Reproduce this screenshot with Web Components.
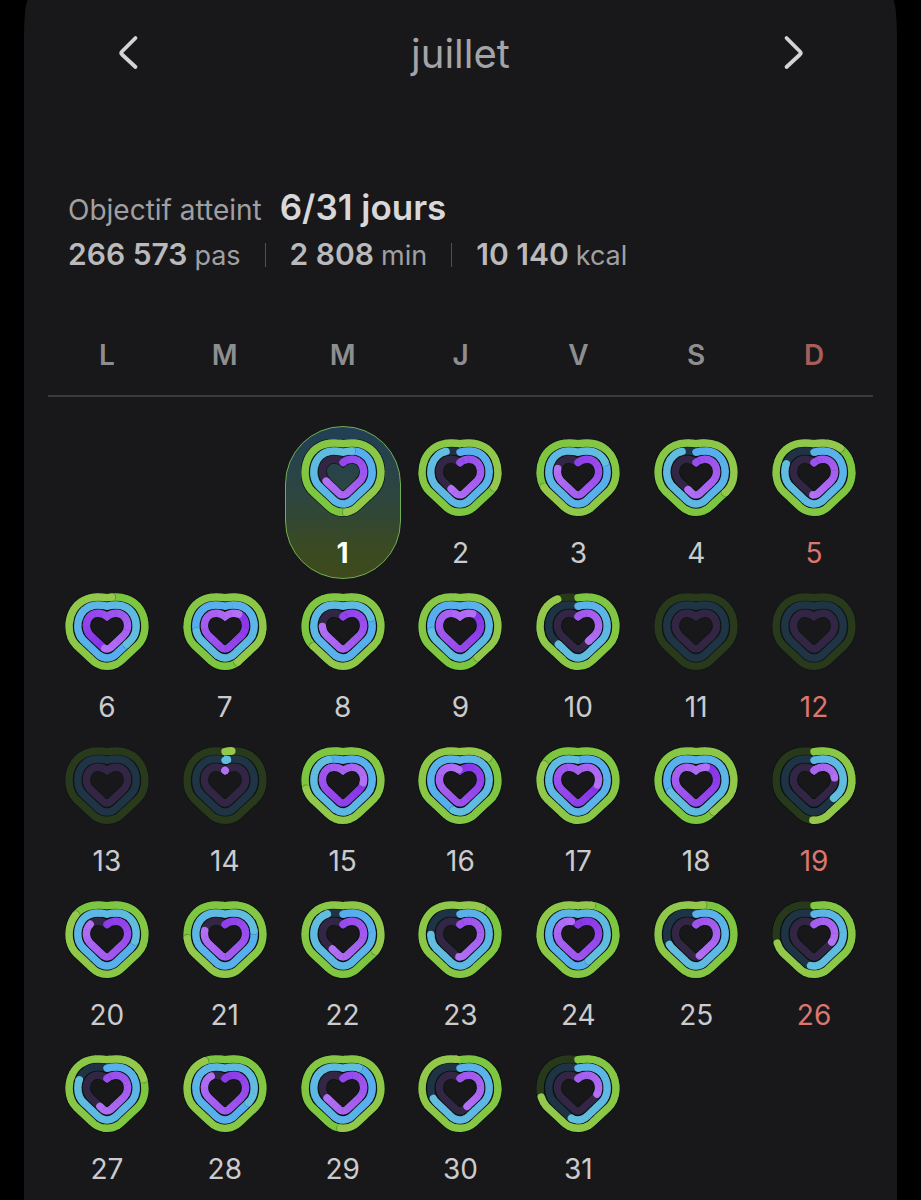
<!DOCTYPE html>
<html lang="fr">
<head>
<meta charset="utf-8">
<meta name="viewport" content="width=device-width, initial-scale=1">
<title>juillet</title>
<style>
body {
  margin: 0;
  background: #000;
  color: #d0d0d2;
  font-family: Inter, Roboto, "Liberation Sans", sans-serif;
}
</style>
</head>
<body>

<activity-card>
  <month-header slot="header">juillet</month-header>
  <goal-summary slot="summary">
    <span slot="label">Objectif atteint</span>
    <span slot="goal">6/31 jours</span>
    <stat-item value="266 573">pas</stat-item>
    <stat-item value="2 808">min</stat-item>
    <stat-item value="10 140">kcal</stat-item>
  </goal-summary>
  <month-calendar selected="1"></month-calendar>
</activity-card>

<script>
class ActivityCard extends HTMLElement {
  constructor() {
    super();
    this.attachShadow({ mode: 'open' });

    this.shadowRoot.innerHTML = `
      <style>
        :host {
          display: block;
          box-sizing: border-box;
          min-height: 100vh;
          margin: 0 24px;
          padding: 0 24px;
          background: #18181a;
          border-radius: 4px 4px 0 0 / 40px 40px 0 0;
        }

        .summary {
          padding: 77px 20px 56px;
        }
      </style>

      <slot name="header"></slot>
      <div class="summary"><slot name="summary"></slot></div>
      <slot></slot>
    `;
  }
}

class MonthHeader extends HTMLElement {
  constructor() {
    super();
    this.attachShadow({ mode: 'open' });

    this.shadowRoot.innerHTML = `
      <style>
        :host {
          display: flex;
          align-items: center;
          justify-content: space-between;
          height: 106px;
          padding: 0 56px;
        }

        h1 {
          margin: 0;
          font-size: 40px;
          font-weight: 400;
          color: #a4a4a6;
        }

        button {
          width: 48px;
          height: 48px;
          padding: 0;
          border: none;
          background: none;
          cursor: pointer;
        }

        svg {
          display: block;
          fill: none;
          stroke: #d4d4d6;
          stroke-width: 3.800;
          stroke-linecap: round;
          stroke-linejoin: round;
        }
      </style>

      <button type="button" aria-label="Mois précédent">
        <svg width="48" height="48" viewBox="0 0 48 48"><path d="M31.500 9 18 22.500Q16.500 24 18 25.500L31.500 38"/></svg>
      </button>
      <h1><slot></slot></h1>
      <button type="button" aria-label="Mois suivant">
        <svg width="48" height="48" viewBox="0 0 48 48"><path d="M17.500 9 31 22.500Q32.500 24 31 25.500L17.500 38"/></svg>
      </button>
    `;
  }
}

class GoalSummary extends HTMLElement {
  constructor() {
    super();
    this.attachShadow({ mode: 'open' });

    this.shadowRoot.innerHTML = `
      <style>
        :host {
          display: block;
          line-height: 48px;
        }

        .goal {
          display: flex;
          align-items: baseline;
          gap: 18px;
          height: 48px;
          font-size: 28px;
          color: #a0a0a2;
        }

        strong {
          font-size: 35px;
          font-weight: 600;
          color: #d8d8da;
        }

        .stats {
          display: flex;
          height: 48px;
        }
      </style>

      <div class="goal">
        <slot name="label"></slot>
        <strong><slot name="goal"></slot></strong>
      </div>
      <div class="stats"><slot></slot></div>
    `;
  }
}

class StatItem extends HTMLElement {
  constructor() {
    super();
    this.attachShadow({ mode: 'open' });

    this.shadowRoot.innerHTML = `
      <style>
        :host {
          display: flex;
          align-items: center;
          font-size: 27px;
          color: #a0a0a2;
        }

        :host(:not(:last-child))::after {
          content: "";
          width: 1px;
          height: 24px;
          margin: 0 24px;
          background: #505053;
        }

        b {
          margin-right: 7px;
          font-size: 30px;
          font-weight: 600;
          color: #bababc;
        }
      </style>

      <span><b>${this.getAttribute('value')}</b><slot></slot></span>
    `;
  }
}

/* RINGS: each path starts at the top notch and runs clockwise */
const RINGS = [
  {
    d: 'M42 4.700C45 4.200 48 4 51 4C69 4 79.900 17 79.900 33.500C79.900 41 77.500 47.500 73 52L57 67C49 75.400 35 75.400 27 67L11 52C6.500 47.500 4.100 41 4.100 33.500C4.100 17 15 4 33 4C36 4 39 4.200 42 4.700Z',
    from: [122, 198, 62],
    to: [149, 200, 76],
    track: '#2b3d1d',
  },
  {
    d: 'M42 13.200C45 12.300 48 12 51.500 12C63.500 12 71.200 21.500 71.200 33C71.200 38.500 69.500 43.700 65.500 47.500L51.500 60.800C46 66.300 38 66.300 32.500 60.800L18.500 47.500C14.500 43.700 12.800 38.500 12.800 33C12.800 21.500 20.500 12 32.500 12C36 12 39 12.300 42 13.200Z',
    from: [86, 172, 240],
    to: [98, 190, 222],
    track: '#21384a',
  },
  {
    d: 'M42 23.500C45 21.200 48 20.200 51 20.200C58 20.200 62.600 26 62.600 32.500C62.600 37 61 40 58 43L46 54.300Q42 57.500 38 54.300L26 43C23 40 21.400 37 21.400 32.500C21.400 26 26 20.200 33 20.200C36 20.200 39 21.200 42 23.500Z',
    from: [134, 50, 232],
    to: [178, 112, 244],
    track: '#38284a',
  },
];
const STROKE = 7.400;
const STEPS = 16;

function dash(d, start, length, color, cap = 'butt', width = STROKE) {
  return `<path d="${d}" pathLength="100" stroke="${color}" stroke-width="${width}" stroke-linecap="${cap}"
    stroke-dasharray="${length} ${100 - length}" stroke-dashoffset="${-start}"/>`;
}

// percent above 100 means a closed ring whose end sits at percent - 100
function drawRing(ring, percent) {
  if (!percent) return '';
  const full = percent > 100;
  const end = full ? percent - 100 : percent;
  const length = full ? 100 : percent;
  const start = end - length;
  const colorAt = (pos) => {
    const t = 1 - (end - pos) / 100;
    return `rgb(${ring.from.map((c, i) => Math.round(c + (ring.to[i] - c) * t)).join(',')})`;
  };

  let out = '';
  if (!full) out += dash(ring.d, start, 0.01, colorAt(start), 'round');
  const step = length / STEPS;
  for (let i = 0; i < STEPS; i++) {
    const pos = start + i * step;
    const extra = i < STEPS - 1 ? 0.3 : 0;
    out += dash(ring.d, pos, Math.min(step + extra, 99), colorAt(pos + step / 2));
  }
  if (full) out += dash(ring.d, end + 0.6, 0.01, 'rgba(0,20,30,0.3)', 'round', STROKE - 1);
  out += dash(ring.d, end, 0.01, colorAt(end), 'round');
  return out;
}

class HeartRings extends HTMLElement {
  constructor() {
    super();
    this.attachShadow({ mode: 'open' });
    const values = this.getAttribute('values').split(',').map(Number);
    const active = values.some((v) => v > 10);

    this.shadowRoot.innerHTML = `
      <style>
        :host {
          display: block;
        }

        svg {
          display: block;
          fill: none;
        }
      </style>

      <svg width="84" height="78" viewBox="0 0 84 78" aria-hidden="true">
        <g opacity="${active ? 0.8 : 0.4}">
          ${RINGS.map((r) => `<path d="${r.d}" stroke="#03140f" stroke-width="9"/>`).join('')}
        </g>
        <g opacity="0.9">
          ${RINGS.map((r) => `<path d="${r.d}" stroke="${r.track}" stroke-width="${STROKE}"/>`).join('')}
        </g>
        ${RINGS.map((r, i) => drawRing(r, values[i])).join('')}
      </svg>
    `;
  }
}

class CalendarDay extends HTMLElement {
  constructor() {
    super();
    this.attachShadow({ mode: 'open' });

    this.shadowRoot.innerHTML = `
      <style>
        :host {
          display: block;
          padding: 0 1px;
        }

        button {
          display: flex;
          flex-direction: column;
          align-items: center;
          gap: 18px;
          box-sizing: border-box;
          width: 100%;
          height: 153px;
          padding: 12px 0 0;
          border: 1px solid transparent;
          border-radius: 58px;
          background: none;
          color: #cbcbcd;
          font: inherit;
          font-size: 28px;
          line-height: 36px;
          cursor: pointer;
        }

        :host([sunday]) button {
          color: #dc766e;
        }

        :host([selected]) button {
          border-color: #6fae52;
          background: linear-gradient(#213f56, #2d4640 45%, #3a4a22 80%, #3f4a1c) border-box;
          color: #fff;
          font-weight: 700;
        }
      </style>

      <button type="button">
        <heart-rings values="${this.getAttribute('rings')}"></heart-rings>
        <span><slot></slot></span>
      </button>
    `;
  }
}

// move, exercise and active time for each day of the month
const DAYS = [
  [148.500, 105, 68], [131, 92, 59], [169, 118, 79], [134, 92, 58], [112, 81, 51],
  [102, 136, 152], [144, 173, 112], [166, 119, 76], [141, 173, 111], [91, 64, 39], [0, 0, 0], [0, 0, 0],
  [0, 0, 0], [3, 1.500, 0.100], [172, 192, 126], [113, 154, 199], [183, 199, 128], [141, 169, 109], [50.500, 36, 22],
  [185, 128, 85], [174, 122, 79], [132, 91, 61], [110, 76, 51], [106, 143, 94], [103, 70, 47], [72, 52, 31],
  [120, 81, 57], [191, 133, 88], [151, 109, 67], [98.500, 70, 43], [72, 54, 29],
];
const FIRST_COLUMN = 3;

class MonthCalendar extends HTMLElement {
  constructor() {
    super();
    this.attachShadow({ mode: 'open' });
    const selected = Number(this.getAttribute('selected'));

    const days = DAYS.map((rings, i) => {
      const flags = [
        i + 1 === selected ? 'selected' : '',
        (i + FIRST_COLUMN) % 7 === 0 ? 'sunday' : '',
      ].join(' ');
      return `<calendar-day rings="${rings}" ${flags}>${i + 1}</calendar-day>`;
    }).join('');

    this.shadowRoot.innerHTML = `
      <style>
        :host {
          display: block;
        }

        .weekdays,
        .days {
          display: grid;
          grid-template-columns: repeat(7, 1fr);
        }

        .weekdays {
          padding-bottom: 20px;
          border-bottom: 2px solid #3b3b3e;
          font-size: 28px;
          font-weight: 600;
          line-height: 40px;
          text-align: center;
          color: #8e8e90;
        }

        .weekdays span:last-child {
          color: #a85d58;
        }

        .days {
          row-gap: 1px;
          padding-top: 29px;
        }

        .days > :first-child {
          grid-column-start: ${FIRST_COLUMN};
        }
      </style>

      <div class="weekdays">
        <span>L</span><span>M</span><span>M</span><span>J</span><span>V</span><span>S</span><span>D</span>
      </div>
      <div class="days">${days}</div>
    `;
  }
}

customElements.define('heart-rings', HeartRings);
customElements.define('calendar-day', CalendarDay);
customElements.define('month-calendar', MonthCalendar);
customElements.define('stat-item', StatItem);
customElements.define('goal-summary', GoalSummary);
customElements.define('month-header', MonthHeader);
customElements.define('activity-card', ActivityCard);
</script>
</body>
</html>
